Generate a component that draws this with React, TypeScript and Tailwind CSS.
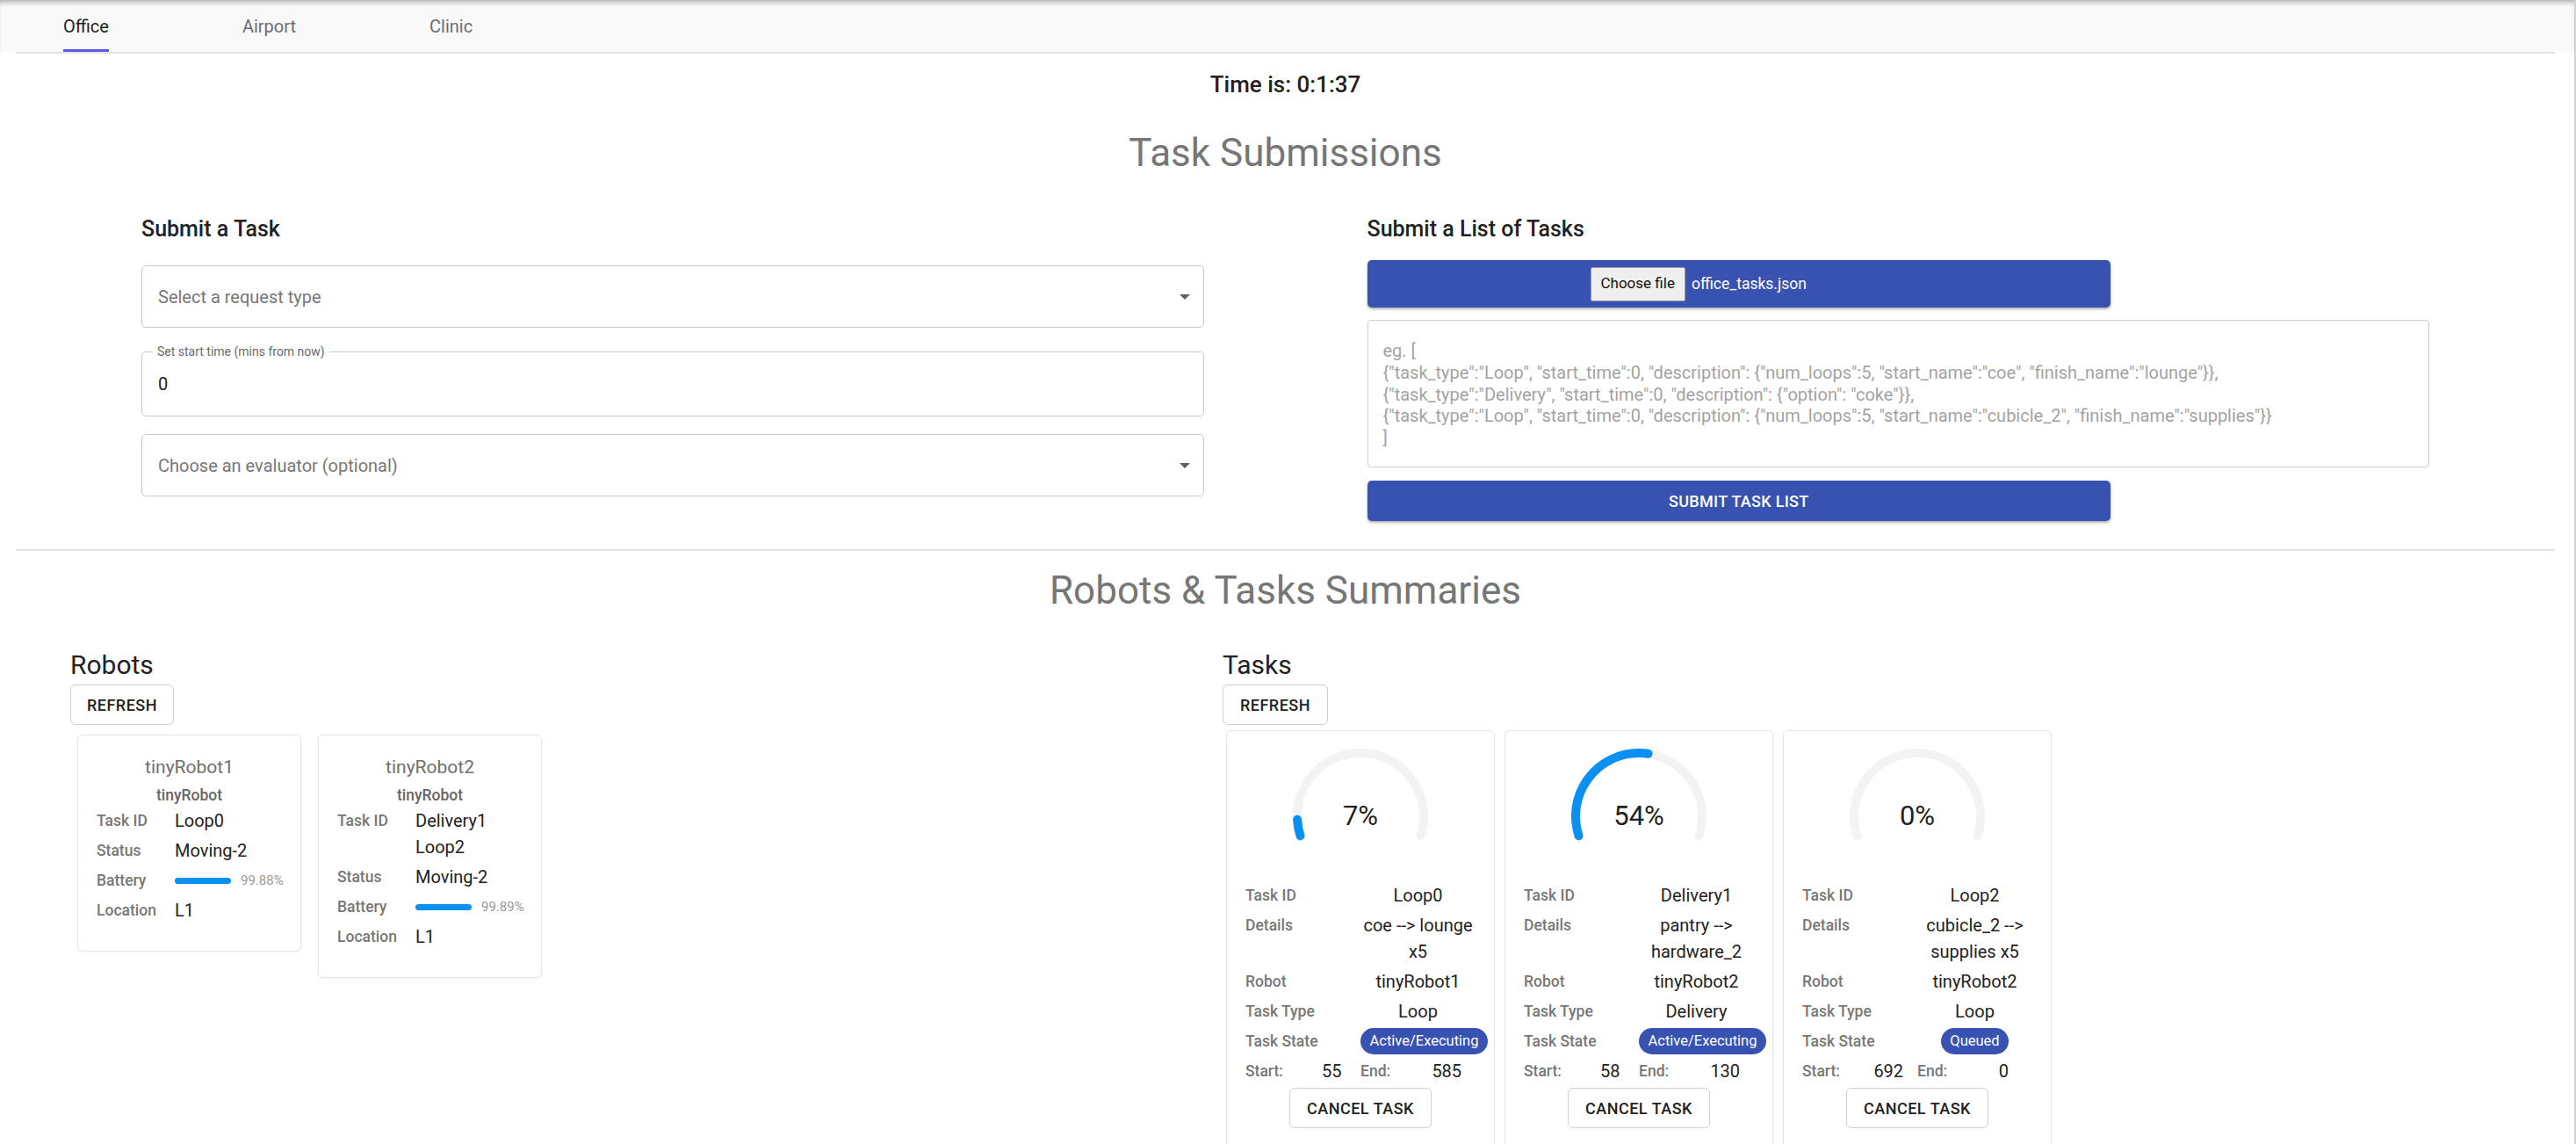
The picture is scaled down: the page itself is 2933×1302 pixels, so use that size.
import React from "react";

// DATA

interface RobotType {
    name: string;
    model: string;
    tasks: string[];
    status: string;
    battery: number;
    location: string;
}

interface TaskType {
    id: string;
    details: string;
    robot: string;
    type: string;
    state: string;
    start: number;
    end: number;
    progress: number;
}

const robots: RobotType[] = [
    { name: "tinyRobot1", model: "tinyRobot", tasks: ["Loop0"], status: "Moving-2", battery: 99.88, location: "L1" },
    { name: "tinyRobot2", model: "tinyRobot", tasks: ["Delivery1", "Loop2"], status: "Moving-2", battery: 99.89, location: "L1" },
];

const tasks: TaskType[] = [
    { id: "Loop0", details: "coe --> lounge x5", robot: "tinyRobot1", type: "Loop", state: "Active/Executing", start: 55, end: 585, progress: 7 },
    { id: "Delivery1", details: "pantry --> hardware_2", robot: "tinyRobot2", type: "Delivery", state: "Active/Executing", start: 58, end: 130, progress: 54 },
    { id: "Loop2", details: "cubicle_2 --> supplies x5", robot: "tinyRobot2", type: "Loop", state: "Queued", start: 692, end: 0, progress: 0 },
];

const placeholder = `eg. [
{"task_type":"Loop", "start_time":0, "description": {"num_loops":5, "start_name":"coe", "finish_name":"lounge"}},
{"task_type":"Delivery", "start_time":0, "description": {"option": "coke"}},
{"task_type":"Loop", "start_time":0, "description": {"num_loops":5, "start_name":"cubicle_2", "finish_name":"supplies"}}
]`;

// arc of 216deg, gap at the bottom
const ARC = "M 12.52 103.25 A 72 72 0 1 1 149.48 103.25";

function Caret() {
    return (
        <svg width="12" height="6" viewBox="0 0 12 6">
            <path d="M0 0 L12 0 L6 6 Z" fill="#5f5f5f" />
        </svg>
    );
}

function Gauge({ value }: { value: number }) {
    return (
        <div className="relative mx-auto w-[162px] h-[140px]">
            <svg width="162" height="140" viewBox="0 0 162 140">
                <path d={ARC} fill="none" stroke="#f3f3f3" strokeWidth="10" strokeLinecap="round" />
                {value > 0 && (
                    <path d={ARC} pathLength={100} fill="none" stroke="#0a90f0" strokeWidth="10" strokeLinecap="round" strokeDasharray={`${value} 100`} />
                )}
            </svg>
            <div className="absolute left-0 right-0 top-[62px] text-center text-[31px] leading-[38px] text-[#222]">{value}%</div>
        </div>
    );
}

function OutlineButton({ label, className = "" }: { label: string; className?: string }) {
    return (
        <button className={`h-[46px] border border-[#cfcfcf] rounded-[6px] bg-white text-[18px] font-medium tracking-[0.5px] text-[#222] ${className}`}>
            {label}
        </button>
    );
}

function RobotCard({ robot }: { robot: RobotType }) {
    return (
        <div className="w-[255px] border border-[#e6e6e6] rounded-[6px] shadow-[0_1px_3px_rgba(0,0,0,0.05)] bg-white pt-[21px] pb-[31px] px-[21px]">
            <div className="text-center text-[21px] leading-[30px] text-[#707070]">{robot.name}</div>
            <div className="text-center text-[17.5px] leading-[26px] font-medium text-[#666] mt-[4px]">{robot.model}</div>
            <div className="grid grid-cols-[89px_1fr] gap-y-[4px] mt-[1px]">
                <div className="text-[17.5px] leading-[30px] font-medium text-[#777]">Task ID</div>
                <div className="text-[20px] leading-[30px] text-[#222]">
                    {robot.tasks.map((t) => (
                        <div key={t}>{t}</div>
                    ))}
                </div>
                <div className="text-[17.5px] leading-[30px] font-medium text-[#777]">Status</div>
                <div className="text-[20px] leading-[30px] text-[#222]">{robot.status}</div>
                <div className="text-[17.5px] leading-[30px] font-medium text-[#777]">Battery</div>
                <div className="flex items-center gap-[11px] h-[30px]">
                    <div className="w-[64px] h-[7px] rounded-full bg-[#0a90f0]" />
                    <span className="text-[15px] text-[#9a9a9a]">{robot.battery}%</span>
                </div>
                <div className="text-[17.5px] leading-[30px] font-medium text-[#777]">Location</div>
                <div className="text-[20px] leading-[30px] text-[#222]">{robot.location}</div>
            </div>
        </div>
    );
}

function TaskCard({ task }: { task: TaskType }) {
    const label = "text-[17.5px] leading-[30px] font-medium text-[#777]";
    const value = "text-[20px] leading-[30px] text-[#222] text-center";
    return (
        <div className="w-[306px] border border-[#e6e6e6] rounded-[6px] shadow-[0_1px_3px_rgba(0,0,0,0.05)] bg-white pt-[16px] pb-[40px] px-[21px]">
            <Gauge value={task.progress} />
            <div className="grid grid-cols-2 gap-y-[4px] mt-[16px]">
                <div className={label}>Task ID</div>
                <div className={value}>{task.id}</div>
                <div className={label}>Details</div>
                <div className={value}>{task.details}</div>
                <div className={label}>Robot</div>
                <div className={value}>{task.robot}</div>
                <div className={label}>Task Type</div>
                <div className={value}>{task.type}</div>
                <div className={label}>Task State</div>
                <div className="text-center whitespace-nowrap">
                    <span className="inline-flex items-center h-[30px] px-[10.5px] rounded-full bg-[#3852b2] text-white text-[16.5px] align-top">{task.state}</span>
                </div>
            </div>
            <div className="grid grid-cols-4 mt-[4px]">
                <div className={label}>Start:</div>
                <div className={value}>{task.start}</div>
                <div className={label}>End:</div>
                <div className={value}>{task.end}</div>
            </div>
            <div className="flex justify-center mt-[4px]">
                <OutlineButton label="CANCEL TASK" className="w-[162px]" />
            </div>
        </div>
    );
}

export default function App() {
    return (
        <div className="min-h-screen w-full bg-white border-r-2 border-[#d2d2d2] font-['Roboto',sans-serif]">
            {/* tabs */}
            <div className="h-[59px] bg-[#f9f9f9] shadow-[inset_0_6px_6px_-4px_rgba(0,0,0,0.35)] flex items-stretch pl-[72px] gap-[152px]">
                <div className="flex items-center pt-[3px] border-b-[3px] border-[#5a5ae6] text-[20px] text-[#222]">Office</div>
                <div className="flex items-center pt-[3px] border-b-[3px] border-transparent text-[20px] text-[#6c6c74]">Airport</div>
                <div className="flex items-center pt-[3px] border-b-[3px] border-transparent text-[20px] text-[#6c6c74]">Clinic</div>
            </div>

            <div className="ml-[18px] mr-[22px] border-t-2 border-[#e2e2e2]">
                <div className="mt-[20px] text-center text-[26px] leading-[31px] font-medium text-[#222]">Time is: 0:1:37</div>
                <h2 className="mt-[36px] text-center text-[44px] leading-[52px] text-[#767676]">Task Submissions</h2>

                <div className="grid grid-cols-2 gap-[186px] px-[143px] mt-[46px]">
                    {/* single task */}
                    <div>
                        <h3 className="text-[25px] leading-[30px] font-medium text-[#222]">Submit a Task</h3>
                        <div className="mt-[26px] h-[71px] border border-[#c9c9c9] rounded-[5px] flex items-center justify-between pl-[18px] pr-[15px]">
                            <span className="text-[20px] text-[#777]">Select a request type</span>
                            <Caret />
                        </div>
                        <fieldset className="mt-[19px] h-[82px] border border-[#c9c9c9] rounded-[5px] px-[12px]">
                            <legend className="px-[5px] text-[14px] leading-[17px] text-[#6a6a6a]">Set start time (mins from now)</legend>
                            <div className="pl-[6px] pt-[16px] text-[20px] leading-[24px] text-[#222]">0</div>
                        </fieldset>
                        <div className="mt-[20px] h-[71px] border border-[#c9c9c9] rounded-[5px] flex items-center justify-between pl-[18px] pr-[15px]">
                            <span className="text-[20px] text-[#777]">Choose an evaluator (optional)</span>
                            <Caret />
                        </div>
                    </div>

                    {/* task list */}
                    <div>
                        <h3 className="text-[25px] leading-[30px] font-medium text-[#222]">Submit a List of Tasks</h3>
                        <div className="mt-[20px] w-[70%] h-[54px] rounded-[5px] bg-[#3852b2] shadow-[0_2px_3px_rgba(0,0,0,0.3)] flex items-center pl-[254px] gap-[7px]">
                            <span className="h-[39px] px-[11px] flex items-center bg-[#efefef] border border-[#9a9a9a] rounded-[2px] text-[17px] text-[#111]">Choose file</span>
                            <span className="text-[17.5px] text-white">office_tasks.json</span>
                        </div>
                        <textarea
                            className="mt-[14px] block w-full h-[168px] resize-none border border-[#cdcdcd] rounded-[4px] pt-[22px] px-[17px] text-[20px] leading-[24.8px] text-[#222] placeholder:text-[#a3a3a3] outline-none"
                            placeholder={placeholder}
                        />
                        <button className="mt-[15px] w-[70%] h-[46px] rounded-[5px] bg-[#3852b2] shadow-[0_2px_3px_rgba(0,0,0,0.3)] text-white text-[18px] font-medium tracking-[0.3px]">
                            SUBMIT TASK LIST
                        </button>
                    </div>
                </div>

                <div className="mt-[32px] border-t-2 border-[#e2e2e2]" />
                <h2 className="mt-[19px] text-center text-[44px] leading-[52px] text-[#767676]">Robots &amp; Tasks Summaries</h2>

                <div className="flex pl-[62px] mt-[41px]">
                    <div className="w-[1312px]">
                        <h3 className="text-[30px] leading-[36px] text-[#222]">Robots</h3>
                        <OutlineButton label="REFRESH" className="mt-[4px] w-[118px]" />
                        <div className="flex items-start gap-[19px] ml-[8px] mt-[11px]">
                            {robots.map((r) => (
                                <RobotCard key={r.name} robot={r} />
                            ))}
                        </div>
                    </div>
                    <div className="flex-1">
                        <h3 className="text-[30px] leading-[36px] text-[#222]">Tasks</h3>
                        <OutlineButton label="REFRESH" className="mt-[4px] w-[120px]" />
                        <div className="flex items-start gap-[11px] ml-[4px] mt-[6px]">
                            {tasks.map((t) => (
                                <TaskCard key={t.id} task={t} />
                            ))}
                        </div>
                    </div>
                </div>
            </div>
        </div>
    );
}
